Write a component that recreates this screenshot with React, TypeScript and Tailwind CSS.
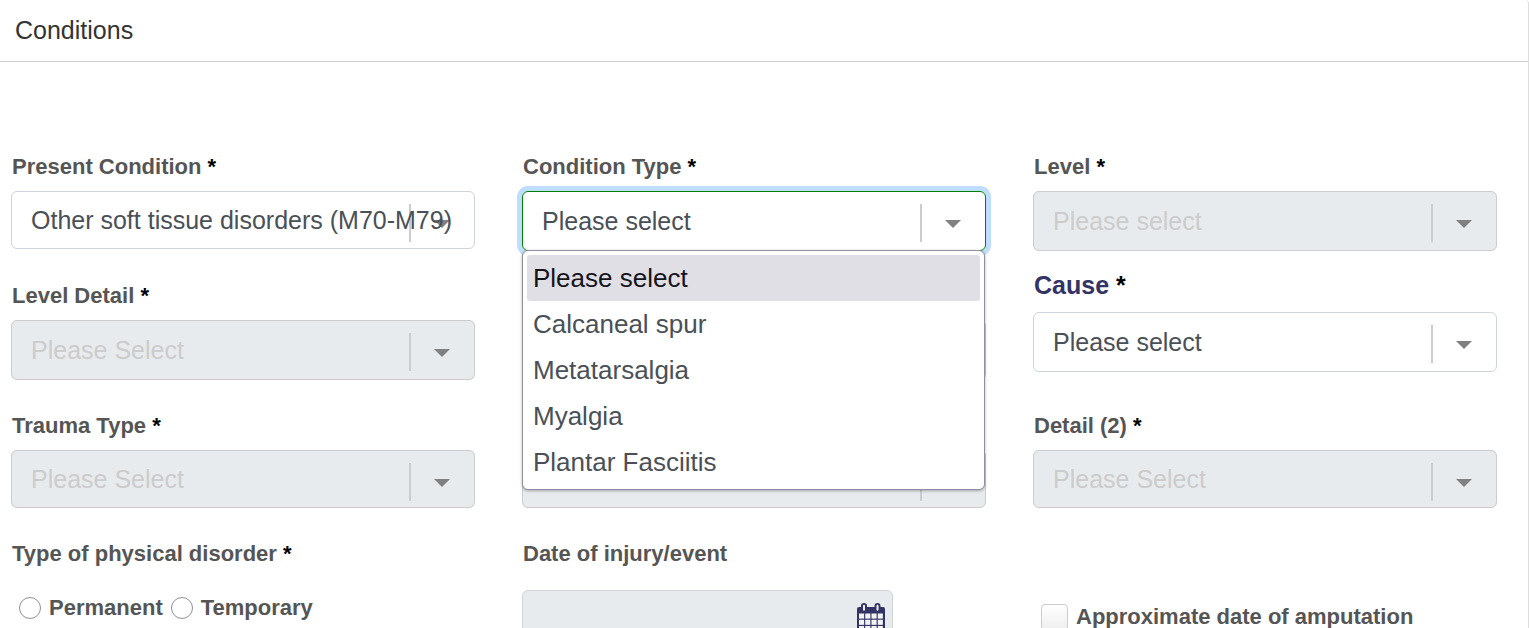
import type { ReactNode } from "react";

const labelText = "text-[22px] font-bold leading-[30px] text-[#555]";

type SelectFieldProps = {
  id: string;
  label?: string;
  value?: string;
  state?: "normal" | "disabled" | "open";
  size?: "short" | "tall";
  heading?: boolean;
  children?: ReactNode;
};

function SelectField({ id, label, value, state = "normal", size = "tall", heading = false, children }: SelectFieldProps) {
  const surface = state === "disabled" ? "bg-[#e8ebee]" : "bg-white";
  const look =
    state === "disabled"
      ? "border-[#ccc] text-[#ccc]"
      : state === "open"
        ? "border-[#008000] text-[#495057] ring-[5px] ring-[#bfdeff]"
        : "border-[#ced4da] text-[#495057]";
  return (
    <div className={heading ? "-mt-[11px] flex flex-col gap-3" : "flex flex-col gap-[9px]"}>
      <label
        htmlFor={id}
        className={
          heading
            ? "min-h-[30px] pl-px text-[25px] font-bold leading-[30px] text-[#333366]"
            : `min-h-[30px] pl-px ${labelText}`
        }
      >
        {label && (
          <>
            {label} <span className="text-black">*</span>
          </>
        )}
      </label>
      <div className={`relative rounded-[6px] ${surface}`}>
        <span className="pointer-events-none absolute top-[13px] right-[64px] h-[38px] w-[2px] bg-[#ccc]" />
        <svg className="pointer-events-none absolute top-[29px] right-[25px] h-2 w-4" viewBox="0 0 16 8" aria-hidden="true">
          <path d="M0 0h16L8 8z" fill="#808080" />
        </svg>
        <select
          id={id}
          disabled={state === "disabled"}
          className={`relative block w-full appearance-none rounded-[6px] border bg-transparent px-[19px] pt-[2px] text-[25px] opacity-100 outline-none ${size === "short" ? "h-[58px]" : "h-[60px]"} ${look}`}
        >
          {value && <option>{value}</option>}
        </select>
        {children}
      </div>
    </div>
  );
}

const conditionTypes = ["Please select", "Calcaneal spur", "Metatarsalgia", "Myalgia", "Plantar Fasciitis"];

function CalendarIcon() {
  return (
    <svg className="h-8 w-[30px]" viewBox="0 0 30 32" aria-hidden="true">
      <path d="M1 6a2 2 0 0 1 2-2h24a2 2 0 0 1 2 2v24a2 2 0 0 1-2 2H3a2 2 0 0 1-2-2z" fill="#333366" />
      <g fill="#f3f4f6">
        {[3, 9.25, 15.5, 21.75].map((x) =>
          [10.5, 16.75, 23].map((y) => <rect key={`${x}-${y}`} x={x} y={y} width="5.1" height="5.1" />),
        )}
      </g>
      <rect x="5" y="0" width="6" height="9" rx="3" fill="#333366" />
      <rect x="18.5" y="0" width="6" height="9" rx="3" fill="#333366" />
      <rect x="7" y="1.7" width="2" height="6" rx="1" fill="#f3f4f6" />
      <rect x="20.5" y="1.7" width="2" height="6" rx="1" fill="#f3f4f6" />
    </svg>
  );
}

function Radio({ label }: { label: string }) {
  return (
    <label className={`flex items-center gap-2 ${labelText}`}>
      <input
        type="radio"
        name="disorder"
        className="size-[22px] appearance-none rounded-full border border-[#8f8f9d] bg-white checked:border-[6px]"
      />
      {label}
    </label>
  );
}

export default function App() {
  return (
    <main className="h-screen overflow-hidden rounded-tr border-r border-[#ddd] bg-white font-['Liberation_Sans',Arial,sans-serif]">
      <header className="border-b border-[#ccc] px-[15px] py-[15px]">
        <h1 className="text-[25px] leading-[31px] text-[#333]">Conditions</h1>
      </header>
      <form className="grid grid-cols-3 grid-rows-[minmax(129px,auto)_minmax(130px,auto)_minmax(128px,auto)_auto] gap-x-[47px] pt-[90px] pr-[31px] pl-[11px]">
        <SelectField id="present" label="Present Condition" value="Other soft tissue disorders (M70-M79)" size="short" />
        <SelectField id="type" label="Condition Type" value="Please select" state="open">
          <ul
            role="listbox"
            aria-labelledby="type"
            className="absolute top-[59px] right-px left-0 z-10 rounded-[6px] border border-[#8f8f9d] bg-white p-1 text-[26px] leading-[46px] text-[#495057] shadow-[0_1px_3px_rgba(0,0,0,0.3)]"
          >
            {conditionTypes.map((name, i) => (
              <li
                key={name}
                role="option"
                aria-selected={i === 0}
                className={`rounded-[3px] px-[6px] ${i === 0 ? "bg-[#e0dfe6] text-[#15141a]" : ""}`}
              >
                {name}
              </li>
            ))}
          </ul>
        </SelectField>
        <SelectField id="level" label="Level" value="Please select" state="disabled" />

        <SelectField id="level-detail" label="Level Detail" value="Please Select" state="disabled" />
        <SelectField id="row-two-middle" state="disabled" />
        <SelectField id="cause" label="Cause" value="Please select" heading />

        <SelectField id="trauma" label="Trauma Type" value="Please Select" state="disabled" size="short" />
        <SelectField id="row-three-middle" state="disabled" size="short" />
        <SelectField id="detail-2" label="Detail (2)" value="Please Select" state="disabled" size="short" />

        <fieldset>
          <legend className={`pl-px ${labelText}`}>
            Type of physical disorder <span className="text-black">*</span>
          </legend>
          <div className="flex gap-2 pt-6 pl-2">
            <Radio label="Permanent" />
            <Radio label="Temporary" />
          </div>
        </fieldset>
        <div className="flex flex-col gap-[21px]">
          <label htmlFor="date" className={`pl-px ${labelText}`}>
            Date of injury/event
          </label>
          <div className="relative w-4/5">
            <input
              id="date"
              type="text"
              disabled
              className="block h-[60px] w-full rounded-[6px] border border-[#ced4da] bg-[#e8ebee] px-[19px] text-[25px]"
            />
            <button type="button" aria-label="Choose date" className="absolute top-[13px] right-[7px]">
              <CalendarIcon />
            </button>
          </div>
        </div>
        <label className={`flex items-center gap-2 self-start pt-[63px] pl-2 ${labelText}`}>
          <input
            type="checkbox"
            className="size-[27px] appearance-none rounded-[4px] border border-[#ccc] bg-linear-to-b from-white to-[#eee]"
          />
          Approximate date of amputation
        </label>
      </form>
    </main>
  );
}
